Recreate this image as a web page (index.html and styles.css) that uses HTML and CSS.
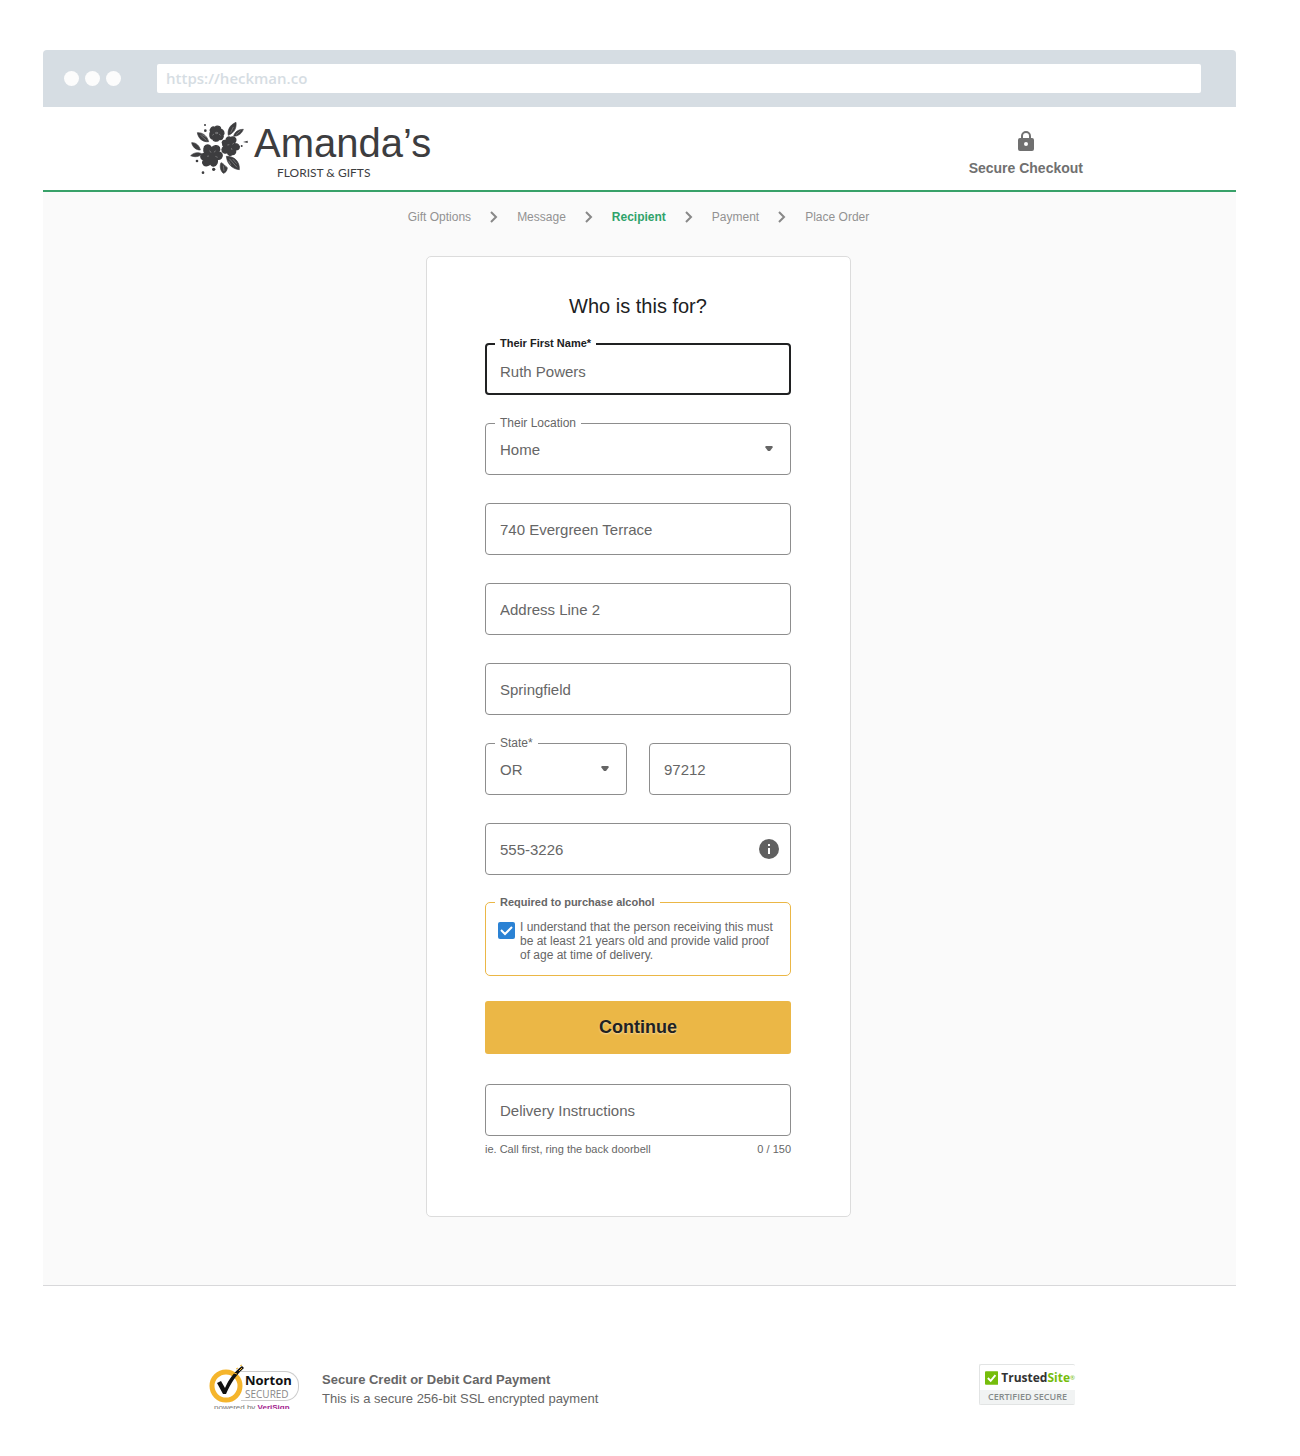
FILE: index.html
```html
<!DOCTYPE html>
<html lang="en">
<head>
<meta charset="utf-8">
<meta name="viewport" content="width=device-width, initial-scale=1">
<title>Amanda's Florist &amp; Gifts - Checkout</title>
<link rel="stylesheet" href="styles.css">
</head>
<body>
<div class="browser">
	<div class="browser-bar">
		<span class="dot"></span>
		<span class="dot"></span>
		<span class="dot"></span>
		<input class="url" type="text" value="https://heckman.co" aria-label="Address">
	</div>

	<header class="header">
		<a class="logo" href="#">
			<svg class="flowers" viewBox="15 15 174 159" aria-hidden="true">
				<!-- blooms -->
				<g class="bloom">
					<path d="M77 47c-4-9 5-17 13-13 6-7 18-2 17 6 9 1 13 12 7 17 3 9-5 16-12 13-4 8-17 7-18-1-10 0-12-16-7-22z"/>
					<path d="M113 84c-4-7 3-13 10-10 0-9 8-14 14-9 7-5 18 1 15 10-1 4-5 6-4 8 10-1 18 6 14 14-3 6-9 4-11 4 3 8-2 16-10 15-5 4-13 1-13-6-8 3-18-1-17-9 0-5 3-7 6-8-3-2-4-5-4-9z"/>
					<path d="M57 98c0-9 10-14 17-9 4 2 5 6 6 8 4-9 18-11 23-3 3 6 0 11-2 14 10 0 14 11 8 18-5 5-11 4-13 3 4 9-1 20-10 21-7 1-9-5-10-8-4 7-14 10-20 4-5-6-2-12 1-15-8 0-12-8-8-14 3-5 8-5 10-5-2-4-3-10-2-14z"/>
				</g>
				<!-- leaves -->
				<g class="leaf">
					<path d="M130 58c-3-14 3-31 23-39 2 16-4 31-23 39zM146 61c2-12 13-21 29-21-5 13-14 20-29 21zM37 50c14-1 29 8 34 27-16 2-31-8-34-27zM20 80c12-1 23 8 26 22-13 0-23-8-26-22zM17 119c9-9 23-12 34-5-9 9-22 10-34 5zM124 121c22-1 41 14 39 40-19-2-36-14-39-40zM108 140c8 2 14 12 19 15-1 11-6 15-12 17-8-7-12-20-7-32z"/>
				</g>
				<!-- buds -->
				<circle cx="60" cy="27" r="3"/><circle cx="61" cy="44" r="4"/><circle cx="36" cy="135" r="4"/><circle cx="59" cy="145" r="4"/><circle cx="86" cy="160" r="5"/><circle cx="54" cy="170" r="4"/><circle cx="170" cy="90" r="3"/><path d="M174 78l14-4v7z"/>
				<path class="cut" d="M87 54l-5 4M102 54l5 4M133 86l-6 1M142 85l5-4M139 96l2 6M78 110l-4-6M88 109l3-5M72 120l-6 1M91 121l7 3M137 50l8-17M153 56l14-12M46 57l18 16M50 55l13 8M133 128l23 26M138 148l-7-13M155 143l-12-14M115 149l2 16"/>
				<ellipse class="cut" cx="95" cy="51" rx="4" ry="2"/>
			</svg>
			<span class="logo-text">
				<span class="logo-name">Amanda’s</span>
				<span class="logo-sub">FLORIST &amp; GIFTS</span>
			</span>
		</a>
		<div class="secure">
			<svg class="lock" viewBox="0 0 16 20" aria-hidden="true">
				<path fill-rule="evenodd" d="M8 0a5 5 0 0 0-5 5v2H2a2 2 0 0 0-2 2v9a2 2 0 0 0 2 2h12a2 2 0 0 0 2-2V9a2 2 0 0 0-2-2h-1V5a5 5 0 0 0-5-5zM5 7V5a3 3 0 0 1 6 0v2zM8 11a2 2 0 1 1 0 4 2 2 0 0 1 0-4z"/>
			</svg>
			Secure Checkout
		</div>
	</header>

	<main class="main">
		<nav class="steps" aria-label="Checkout steps">
			<a href="#">Gift Options</a>
			<svg class="chevron" viewBox="0 0 8 12" aria-hidden="true"><path d="M1 1l5 5-5 5"/></svg>
			<a href="#">Message</a>
			<svg class="chevron" viewBox="0 0 8 12" aria-hidden="true"><path d="M1 1l5 5-5 5"/></svg>
			<a class="current" href="#" aria-current="step">Recipient</a>
			<svg class="chevron" viewBox="0 0 8 12" aria-hidden="true"><path d="M1 1l5 5-5 5"/></svg>
			<a href="#">Payment</a>
			<svg class="chevron" viewBox="0 0 8 12" aria-hidden="true"><path d="M1 1l5 5-5 5"/></svg>
			<a href="#">Place Order</a>
		</nav>

		<form class="card">
			<h1>Who is this for?</h1>

			<div class="field active">
				<label for="first_name">Their First Name*</label>
				<input id="first_name" type="text" value="Ruth Powers">
			</div>
			<div class="field">
				<label for="location">Their Location</label>
				<select id="location">
					<option>Home</option>
					<option>Business</option>
				</select>
				<svg class="arrow" viewBox="0 0 8 6" aria-hidden="true"><path d="M1 0h6l1 1-3 4H3L0 1z"/></svg>
			</div>
			<div class="field">
				<input type="text" value="740 Evergreen Terrace" aria-label="Address">
			</div>
			<div class="field">
				<input type="text" placeholder="Address Line 2" aria-label="Address Line 2">
			</div>
			<div class="field">
				<input type="text" value="Springfield" aria-label="City">
			</div>
			<div class="row">
				<div class="field">
					<label for="state">State*</label>
					<select id="state">
						<option>OR</option>
						<option>WA</option>
					</select>
					<svg class="arrow" viewBox="0 0 8 6" aria-hidden="true"><path d="M1 0h6l1 1-3 4H3L0 1z"/></svg>
				</div>
				<div class="field">
					<input type="text" value="97212" aria-label="Zip code">
				</div>
			</div>
			<div class="field">
				<input type="tel" value="555-3226" aria-label="Phone">
				<button class="info" type="button" aria-label="Why we need this">
					<svg viewBox="0 0 20 20" aria-hidden="true"><circle cx="10" cy="10" r="10"/><path d="M9 5h2v2H9zM9 9h2v6H9z"/></svg>
				</button>
			</div>

			<fieldset class="alcohol">
				<legend>Required to purchase alcohol</legend>
				<input id="over21" type="checkbox" checked>
				<label for="over21">I understand that the person receiving this must be at least 21 years old and provide valid proof of age at time of delivery.</label>
				<svg class="tick" viewBox="0 0 17 17" aria-hidden="true"><path d="M3 8l4 4 7-7"/></svg>
			</fieldset>

			<button class="continue" type="submit">Continue</button>

			<div class="field last">
				<input type="text" placeholder="Delivery Instructions" aria-label="Delivery Instructions" maxlength="150">
			</div>
			<div class="hint">
				<span>ie. Call first, ring the back doorbell</span>
				<span>0 / 150</span>
			</div>
		</form>
	</main>

	<footer class="footer">
		<div class="norton">
			<svg class="norton-mark" viewBox="0 0 36 40" aria-hidden="true">
				<circle cx="17" cy="22" r="14"/>
				<path d="M8 19l4-2 4 7c4-9 9-16 17-22l2 2c-8 7-13 15-18 26h-3z"/>
				<path class="spark" d="M27 5l2-1M30 7l3-3M25 9l3 1M31 2l2-1"/>
			</svg>
			<div class="norton-pill">
				<b>Norton</b>
				<span>SECURED</span>
			</div>
			<div class="norton-by">powered by <b>VeriSign</b></div>
		</div>
		<div class="payment">
			<b>Secure Credit or Debit Card Payment</b>
			<span>This is a secure 256-bit SSL encrypted payment</span>
		</div>
		<div class="trusted">
			<div class="trusted-top">
				<svg viewBox="0 0 14 14" aria-hidden="true"><rect width="14" height="14" rx="1"/><path d="M3 7l3 3 5-6"/></svg>
				<b>Trusted<span>Site</span></b><sup>®</sup>
			</div>
			<div class="trusted-bottom">CERTIFIED SECURE</div>
		</div>
	</footer>
</div>
</body>
</html>
```
FILE: styles.css
```css
* { box-sizing: border-box; }
body {
	margin: 0;
	background: #fff;
	color: #666;
	font-family: "Liberation Sans", Arial, sans-serif;
}
a { color: inherit; text-decoration: none; }
input, select, button { font-family: inherit; }
.browser { margin: 50px 64px 0 43px; }

/* browser chrome */
.browser-bar {
	display: flex;
	align-items: center;
	gap: 6px;
	height: 57px;
	padding: 0 35px 0 21px;
	background: #d6dde3;
	border-radius: 4px 4px 0 0;
}
.dot {
	width: 15px;
	height: 15px;
	border-radius: 50%;
	background: #fcfcfc;
}
.url {
	flex: 1;
	height: 29px;
	margin-left: 30px;
	padding: 0 9px 2px;
	border: 0;
	border-radius: 2px;
	background: #fff;
	color: #d6dde3;
	font: 600 15px "Open Sans", sans-serif;
}

/* header */
.header {
	display: flex;
	justify-content: space-between;
	align-items: flex-start;
	height: 85px;
	padding: 14px 153px 0 147px;
	border-bottom: 2px solid #38a169;
}
.logo {
	display: flex;
	gap: 6px;
	color: #3d3d3f;
}
.flowers {
	width: 58px;
	height: 53px;
	fill: #3d3d3f;
}
.flowers .bloom { stroke: #3d3d3f; stroke-width: 4; }
.flowers .leaf { stroke: #3d3d3f; stroke-width: 2; }
.flowers .cut {
	fill: none;
	stroke: #ddd;
	stroke-width: 1;
}
.logo-text {
	display: flex;
	flex-direction: column;
}
.logo-name { font-size: 40px; line-height: 44px; }
.logo-sub {
	padding-left: 23px;
	font: 12px/16px Lato, sans-serif;
}
.secure {
	display: flex;
	flex-direction: column;
	align-items: center;
	gap: 8px;
	padding-top: 10px;
	color: #707070;
	font-size: 14px;
	font-weight: bold;
	line-height: 18px;
}
.lock { width: 16px; height: 20px; fill: #707070; }

/* checkout */
.main {
	padding: 16px 2px 68px 0;
	background: #fafafa;
	border-bottom: 1px solid #d8d8da;
}
.steps {
	display: flex;
	justify-content: center;
	align-items: center;
	gap: 19px;
	margin-bottom: 30px;
	color: #929292;
	font-size: 12px;
	line-height: 18px;
}
.steps .current { color: #2fa36b; font-weight: bold; }
.chevron {
	width: 8px;
	height: 12px;
	fill: none;
	stroke: #888;
	stroke-width: 2;
}
.card {
	max-width: 425px;
	margin: 0 auto;
	padding: 36px 59px 59px 58px;
	background: #fff;
	border: 1px solid #dcdcdc;
	border-radius: 5px;
}
h1 {
	margin: 0 0 24px;
	color: #202122;
	font-size: 20px;
	font-weight: normal;
	line-height: 26px;
	text-align: center;
}
.field {
	position: relative;
	margin-bottom: 28px;
}
.field label {
	position: absolute;
	top: -8px;
	left: 10px;
	padding: 0 5px;
	background: #fff;
	font-size: 12px;
	line-height: 16px;
}
.field input, .field select {
	display: block;
	width: 100%;
	height: 52px;
	padding: 0 14px;
	border: 1px solid #8d8d8d;
	border-radius: 4px;
	background: #fff;
	color: #666;
	font-size: 15px;
	appearance: none;
}
.field input::placeholder { color: #666; }
.field.active label {
	color: #202122;
	font-size: 11px;
	font-weight: bold;
}
.field.active input {
	padding: 4px 13px 0;
	border: 2px solid #202122;
}
.arrow {
	position: absolute;
	top: 23px;
	right: 18px;
	width: 8px;
	height: 6px;
	fill: #666;
	pointer-events: none;
}
.row {
	display: grid;
	grid-template-columns: 1fr 1fr;
	gap: 22px;
}
.info {
	position: absolute;
	top: 16px;
	right: 12px;
	padding: 0;
	border: 0;
	background: none;
}
.info svg { display: block; width: 20px; height: 20px; fill: #606060; }
.info path { fill: #fff; }
.alcohol {
	position: relative;
	display: flex;
	gap: 5px;
	margin: -8px 0 25px;
	padding: 11px 10px 13px 12px;
	border: 1px solid #ebb746;
	border-radius: 5px;
	font-size: 12px;
	line-height: 14px;
}
.alcohol legend {
	margin-left: -3px;
	padding: 0 5px;
	font-size: 11px;
	font-weight: bold;
}
.alcohol input {
	flex: none;
	width: 17px;
	height: 17px;
	margin: 2px 0 0;
	border-radius: 2px;
	background: #2b82d4;
	appearance: none;
}
.tick {
	display: none;
	position: absolute;
	top: 13px;
	left: 12px;
	width: 17px;
	height: 17px;
	fill: none;
	stroke: #fff;
	stroke-width: 2;
	pointer-events: none;
}
.alcohol input:checked ~ .tick { display: block; }
.continue {
	display: block;
	width: 100%;
	height: 53px;
	margin-bottom: 30px;
	border: 0;
	border-radius: 3px;
	background: #ebb746;
	color: #202122;
	font-size: 18px;
	font-weight: bold;
	text-shadow: 0 1px 2px rgba(255, 255, 255, .5);
}
.field.last { margin-bottom: 5px; }
.hint {
	display: flex;
	justify-content: space-between;
	font-size: 11px;
	line-height: 16px;
}

/* seals */
.footer {
	display: flex;
	align-items: flex-start;
	padding: 78px 161px 40px 166px;
}
.norton {
	display: grid;
	grid-template-columns: 32px 58px;
	width: 90px;
}
.norton-mark {
	width: 36px;
	height: 40px;
	overflow: visible;
	z-index: 1;
	fill: #111;
}
.norton-mark circle { fill: #fff; stroke: #f5b52c; stroke-width: 5; }
.norton-mark .spark { stroke: #f5b52c; stroke-width: 1; }
.norton-pill {
	display: flex;
	flex-direction: column;
	height: 30px;
	margin-top: 7px;
	padding-left: 4px;
	border: 1px solid #ccc;
	border-left: 0;
	border-radius: 0 14px 14px 0;
	color: #888;
	font: 10px/12px "Open Sans", sans-serif;
}
.norton-pill b {
	color: #111;
	font-size: 13px;
	line-height: 16px;
}
.norton-by {
	grid-column: 1 / 3;
	height: 5px;
	padding-left: 5px;
	overflow: hidden;
	color: #777;
	font-size: 8px;
	line-height: 8px;
	white-space: nowrap;
}
.norton-by b { color: #a3238e; }
.payment {
	display: flex;
	flex-direction: column;
	margin: 6px auto 0 23px;
	font-size: 13px;
	line-height: 19px;
}
.trusted {
	width: 96px;
	border: 1px solid #e2e4e4;
	border-right: 0;
	border-radius: 2px;
	font-family: "Open Sans", sans-serif;
}
.trusted-top {
	display: flex;
	align-items: center;
	height: 25px;
	padding-left: 5px;
	color: #333;
	font-size: 12px;
}
.trusted-top svg { width: 14px; height: 14px; margin-right: 3px; fill: #76bd0b; }
.trusted-top path { fill: none; stroke: #fff; stroke-width: 2; }
.trusted-top span { color: #76bd0b; }
.trusted-top sup { color: #76bd0b; font-size: 6px; }
.trusted-bottom {
	background: #f1f3f3;
	color: #858a8a;
	font-size: 9px;
	font-weight: 600;
	line-height: 14px;
	text-align: center;
}
```
